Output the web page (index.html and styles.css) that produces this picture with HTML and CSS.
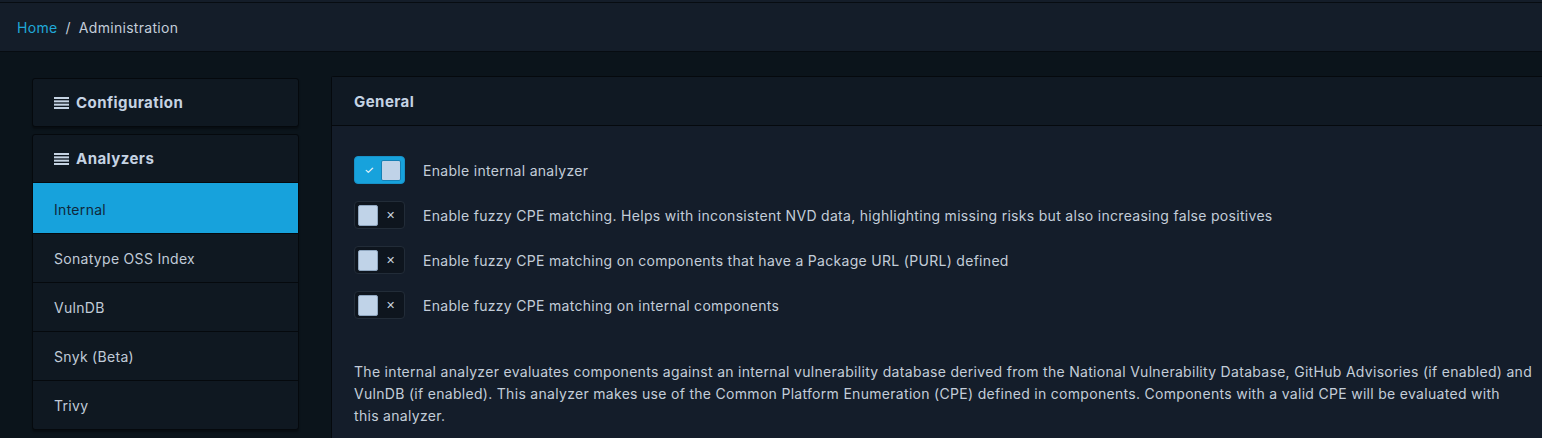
FILE: index.html
```html
<!DOCTYPE html>
<html lang="en">
<head>
<meta charset="utf-8">
<title>Administration</title>
<link rel="stylesheet" href="styles.css">
</head>
<body>
<div class="topline"></div>
<nav class="breadcrumb">
  <a class="crumb-link" href="#">Home</a>
  <span class="crumb-sep">/</span>
  <span class="crumb-current">Administration</span>
</nav>
<main class="content">
  <aside class="sidebar">
    <section class="side-card">
      <div class="side-head">
        <svg class="menu-icon" viewBox="0 0 15 12" width="15" height="12"><rect x="0" y="0" width="15" height="2"/><rect x="0" y="3.33" width="15" height="2"/><rect x="0" y="6.66" width="15" height="2"/><rect x="0" y="10" width="15" height="2"/></svg>
        <span>Configuration</span>
      </div>
    </section>
    <section class="side-card">
      <div class="side-head">
        <svg class="menu-icon" viewBox="0 0 15 12" width="15" height="12"><rect x="0" y="0" width="15" height="2"/><rect x="0" y="3.33" width="15" height="2"/><rect x="0" y="6.66" width="15" height="2"/><rect x="0" y="10" width="15" height="2"/></svg>
        <span>Analyzers</span>
      </div>
      <ul class="side-list">
        <li class="side-item active">Internal</li>
        <li class="side-item">Sonatype OSS Index</li>
        <li class="side-item">VulnDB</li>
        <li class="side-item">Snyk (Beta)</li>
        <li class="side-item">Trivy</li>
      </ul>
    </section>
  </aside>
  <section class="main-card">
    <header class="main-head">General</header>
    <div class="main-body">
      <div class="option">
        <span class="switch on"><span class="mark">✓</span><span class="knob"></span></span>
        <span class="label">Enable internal analyzer</span>
      </div>
      <div class="option">
        <span class="switch"><span class="knob"></span><span class="mark">✕</span></span>
        <span class="label">Enable fuzzy CPE matching. Helps with inconsistent NVD data, highlighting missing risks but also increasing false positives</span>
      </div>
      <div class="option">
        <span class="switch"><span class="knob"></span><span class="mark">✕</span></span>
        <span class="label">Enable fuzzy CPE matching on components that have a Package URL (PURL) defined</span>
      </div>
      <div class="option">
        <span class="switch"><span class="knob"></span><span class="mark">✕</span></span>
        <span class="label">Enable fuzzy CPE matching on internal components</span>
      </div>
      <p class="desc">The internal analyzer evaluates components against an internal vulnerability database derived from the National Vulnerability Database, GitHub Advisories (if enabled) and VulnDB (if enabled). This analyzer makes use of the Common Platform Enumeration (CPE) defined in components. Components with a valid CPE will be evaluated with <span class="nowrap">this analyzer.</span></p>
    </div>
  </section>
</main>
</body>
</html>
```
FILE: styles.css
```css
* { box-sizing: border-box; }
html, body { margin: 0; padding: 0; }
body {
  background: #0b141b;
  font-family: Inter, "Noto Sans", sans-serif;
  font-size: 14px;
  letter-spacing: 0.3px;
  color: #c3cdd9;
  overflow: hidden;
  width: 1542px;
  height: 438px;
}
.topline {
  height: 3px;
  background: #141d29;
  border-bottom: 1px solid #070c11;
}
.breadcrumb {
  height: 49px;
  background: #141d29;
  border-bottom: 1px solid #070c11;
  display: flex;
  align-items: center;
  padding: 0 17px;
  gap: 8px;
  font-size: 14px;
}
.crumb-link { color: #20a8d8; text-decoration: none; }
.crumb-sep { color: #c3cdd9; }
.crumb-current { color: #c3cdd9; }

.content {
  display: grid;
  grid-template-columns: 267px 1226px;
  column-gap: 32px;
  padding: 24px 0 0 32px;
  align-items: start;
}
.sidebar { display: flex; flex-direction: column; gap: 7px; padding-top: 2px; }
.side-card {
  background: #0f1821;
  border: 1px solid #05090d;
  border-radius: 3px;
  box-shadow: 0 2px 2px rgba(0,0,0,0.35);
}
.side-head {
  height: 47px;
  display: flex;
  align-items: center;
  gap: 7px;
  padding-left: 21px;
  font-weight: 700;
  font-size: 15px;
  letter-spacing: 0.45px;
  color: #c5d3e3;
}
.menu-icon { fill: #c5d3e3; }
.side-list { list-style: none; margin: 0; padding: 0; }
.side-item {
  height: 49px;
  display: flex;
  align-items: center;
  padding-left: 21px;
  border-top: 1px solid #05090d;
  color: #c0cbd8;
}
.side-item.active {
  background: #17a2dc;
  color: #10283b;
  height: 51px;
  padding-top: 2px;
}

.main-card {
  background: #141d2a;
  border: 1px solid #05090d;
  border-right: 0;
  border-radius: 3px 0 0 3px;
}
.main-head {
  height: 49px;
  background: #101923;
  border-bottom: 1px solid #05090d;
  display: flex;
  align-items: center;
  padding-left: 22px;
  font-weight: 700;
  font-size: 15px;
  letter-spacing: 0.45px;
  color: #c5d3e3;
}
.main-body { padding: 30px 0 30px 22px; }
.option {
  display: flex;
  align-items: center;
  gap: 18px;
  height: 28px;
  margin-bottom: 17px;
}
.label { color: #c3cdd9; }
.switch {
  width: 51px;
  height: 28px;
  border-radius: 4px;
  border: 1px solid #222c38;
  background: #0e151e;
  display: flex;
  align-items: center;
  padding: 0 3px;
  justify-content: space-between;
  flex-shrink: 0;
  letter-spacing: 0;
}
.switch.on {
  background: #17a2dc;
  border-color: #1791c8;
}
.knob {
  width: 20px;
  height: 21px;
  background: #c0d3e8;
  border-radius: 2px;
  border: 1px solid #8fa6bf;
}
.switch.on .knob { border-color: #1580b5; }
.mark {
  width: 22px;
  text-align: center;
  font-size: 11px;
}
.switch .mark { color: #c8d2dd; }
.switch.on .mark { color: #ffffff; }
.desc {
  margin: 42px 0 0 0;
  line-height: 22px;
  color: #c3cdd9;
}
.nowrap { white-space: nowrap; }
```
